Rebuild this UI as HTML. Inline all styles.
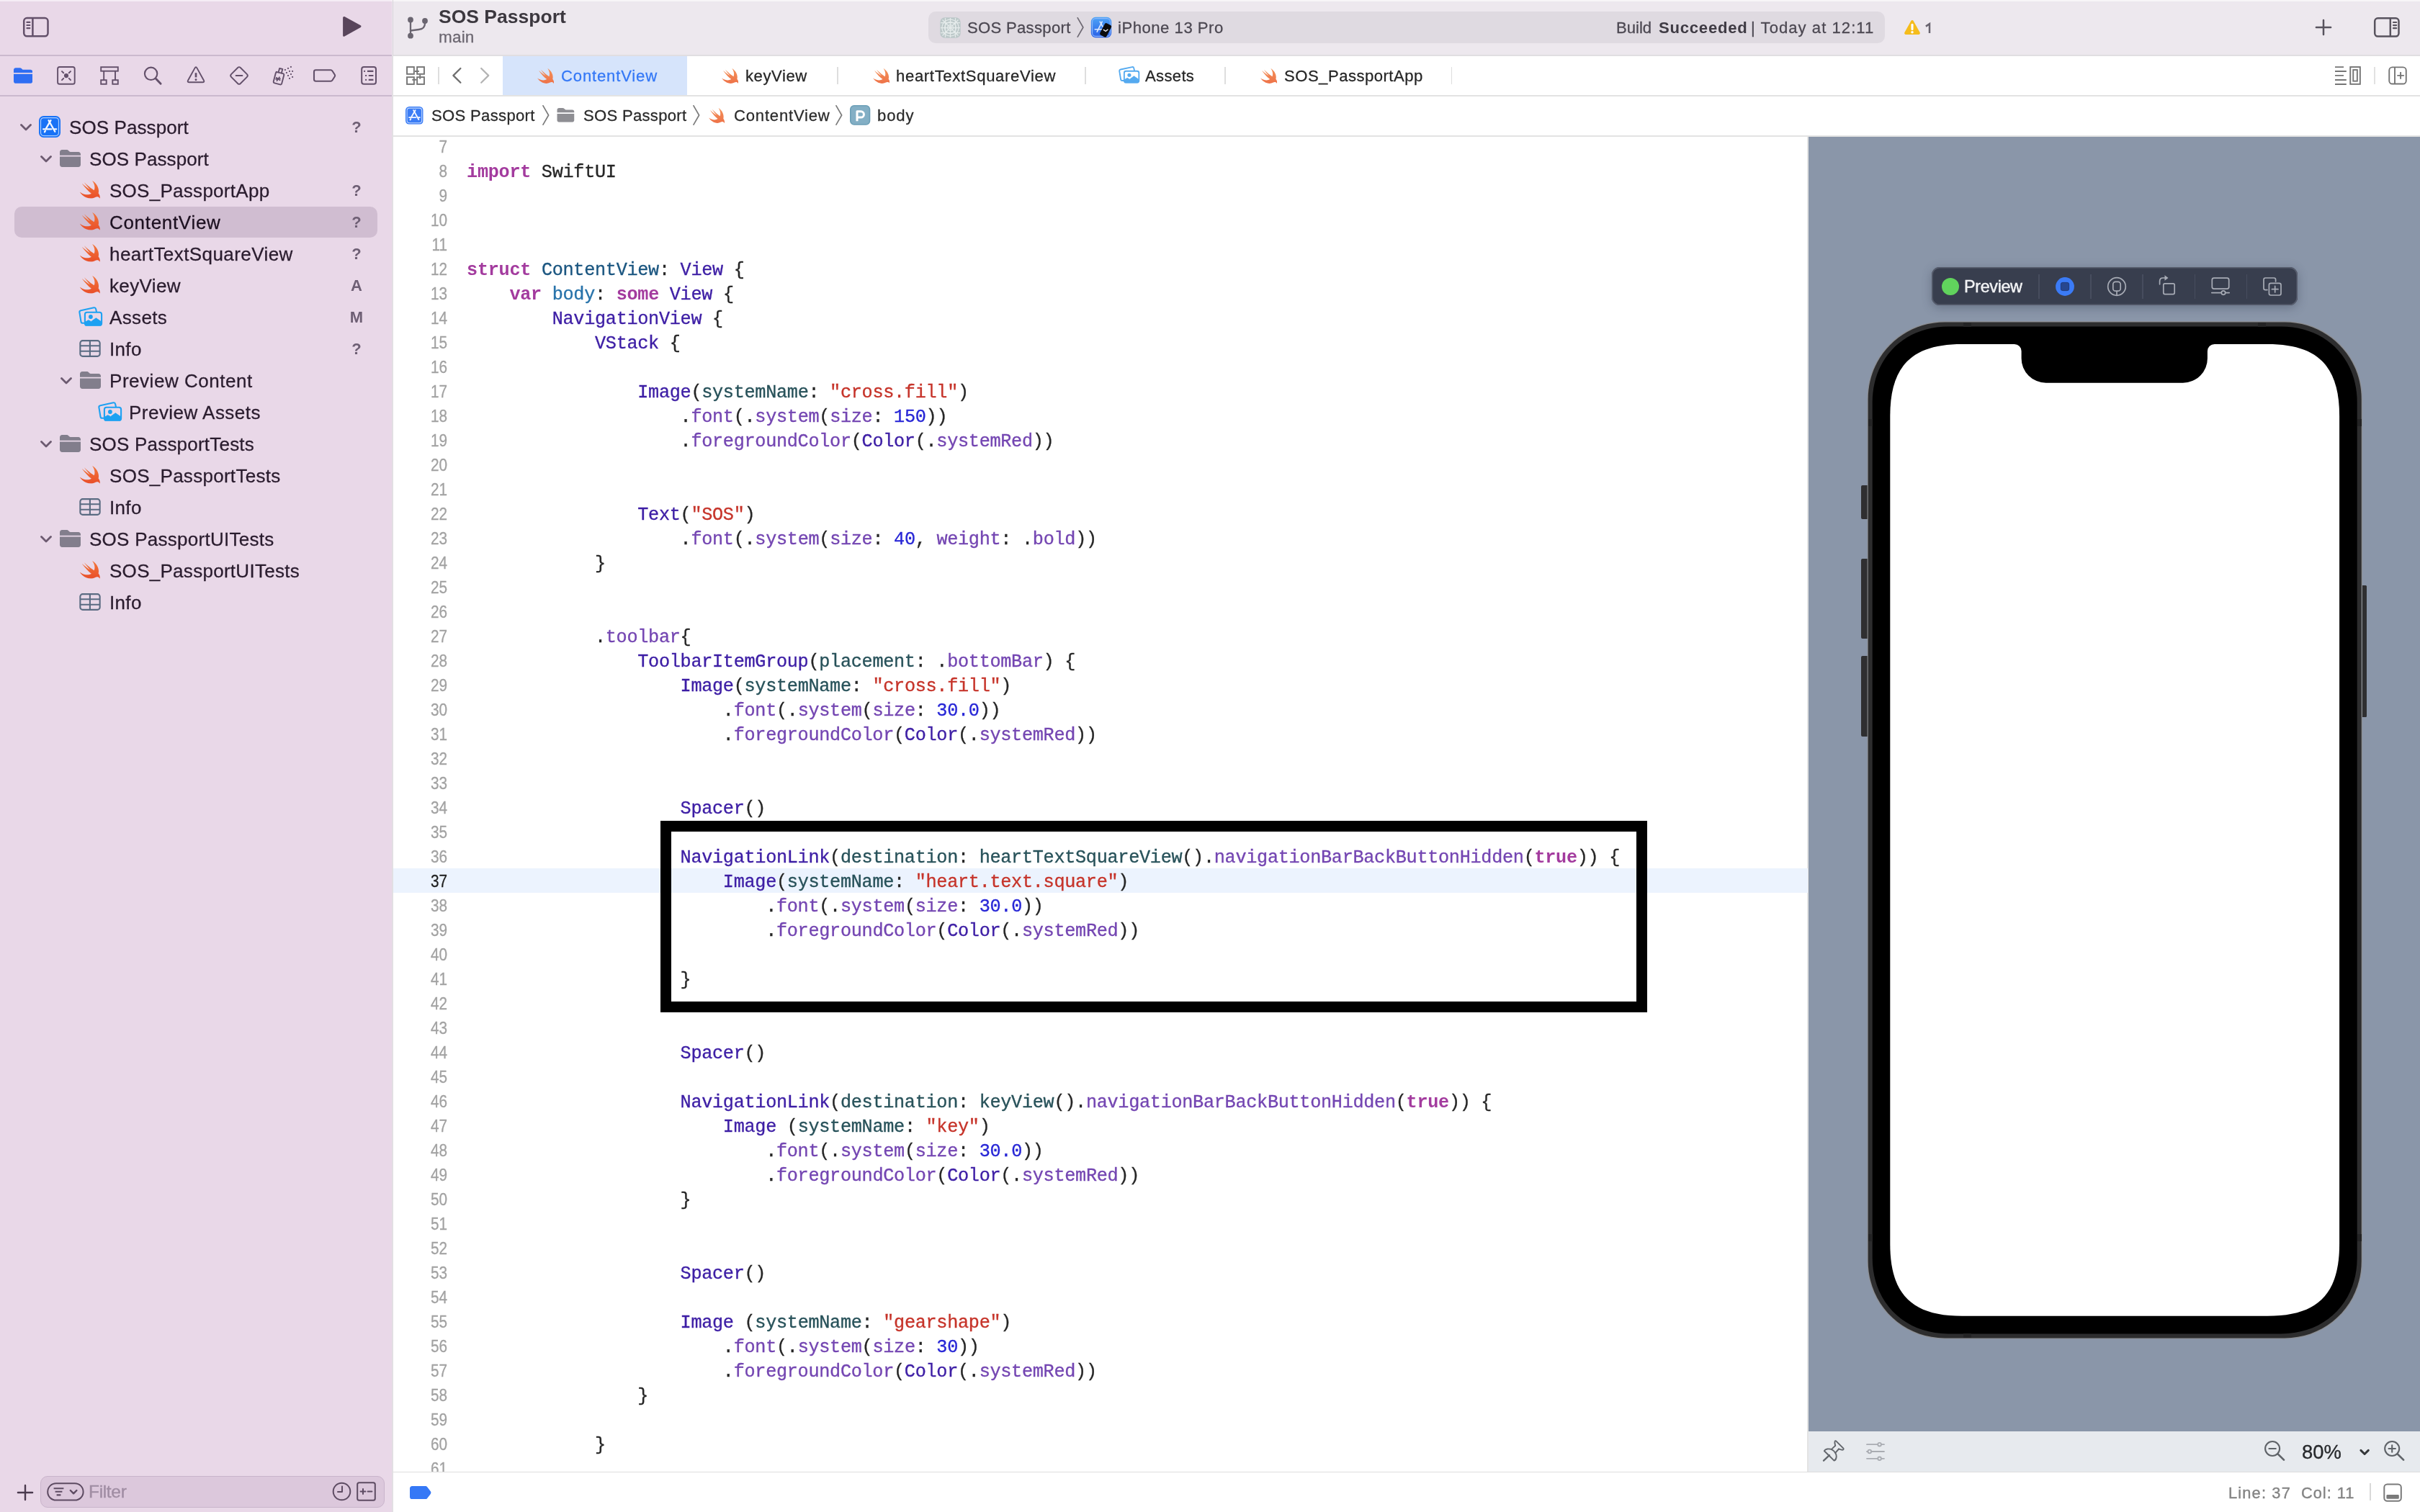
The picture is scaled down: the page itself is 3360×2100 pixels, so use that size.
<!DOCTYPE html>
<html><head><meta charset="utf-8"><title>Xcode</title>
<style>
html,body{margin:0;padding:0;}
body{width:3360px;height:2100px;overflow:hidden;background:#fff;position:relative;font-family:"Liberation Sans",sans-serif;}
body>div,body>span,body>svg{position:absolute;}
.t{white-space:pre;will-change:transform;}
.s{font-family:"Liberation Sans",sans-serif;-webkit-text-stroke:0.280px;}
.m{font-family:"Liberation Mono",monospace;}
#code{position:absolute;left:0;top:0;will-change:transform;}
.cl{position:absolute;left:648.100px;height:34px;line-height:34px;font-family:"Liberation Mono",monospace;font-size:25.200px;white-space:pre;color:#262626;letter-spacing:-0.292px;-webkit-text-stroke:0.350px;}
.ln{position:absolute;width:80px;left:540.800px;text-align:right;height:34px;line-height:34px;font-family:"Liberation Sans",sans-serif;font-size:23.600px;color:#a2a2a2;transform:scaleX(.88);transform-origin:100% 50%;-webkit-text-stroke:0.300px;}
.k{color:#a33b9e;font-weight:bold;-webkit-text-stroke:0;}
.c{color:#3d1ea5;}
.f{color:#7446b2;}
.p{color:#28525a;}
.d{color:#1b5680;}
.b{color:#2873aa;}
.r{color:#c6342a;}
.n{color:#2726d6;}
</style></head>
<body>
<svg width="0" height="0" style="position:absolute"><defs>
<linearGradient id="sg" x1="0" y1="0" x2="0" y2="1"><stop offset="0" stop-color="#f3773a"/><stop offset="1" stop-color="#e94f2a"/></linearGradient>
<linearGradient id="sg2" x1="0" y1="0" x2="0" y2="1"><stop offset="0" stop-color="#f4935a"/><stop offset="1" stop-color="#ee7248"/></linearGradient>
<symbol id="swift" viewBox="2.42 3.42 18.1 16.2" preserveAspectRatio="none"><path fill="url(#sg)" d="M13.543 3.41c4.114 2.47 6.545 7.162 5.549 11.131-.024.093-.05.181-.076.272l.002.001c2.062 2.538 1.5 5.258 1.236 4.745-1.072-2.086-3.066-1.568-4.088-1.043a6.803 6.803 0 0 1-.281.158l-.02.012-.002.002c-2.115 1.123-4.957 1.205-7.812-.022a12.568 12.568 0 0 1-5.64-4.838c.649.48 1.35.902 2.097 1.252 3.019 1.414 6.051 1.311 8.197-.002C9.651 12.73 7.101 9.67 5.146 7.191a10.628 10.628 0 0 1-1.005-1.384c2.34 2.142 6.038 4.83 7.365 5.576C8.69 8.408 6.208 4.743 6.324 4.86c4.436 4.47 8.528 6.996 8.528 6.996.154.085.27.154.36.213.085-.215.16-.437.224-.668.708-2.588-.09-5.548-1.893-7.992z"/></symbol>
<symbol id="swift2" viewBox="2.42 3.42 18.1 16.2" preserveAspectRatio="none"><path fill="url(#sg2)" d="M13.543 3.41c4.114 2.47 6.545 7.162 5.549 11.131-.024.093-.05.181-.076.272l.002.001c2.062 2.538 1.5 5.258 1.236 4.745-1.072-2.086-3.066-1.568-4.088-1.043a6.803 6.803 0 0 1-.281.158l-.02.012-.002.002c-2.115 1.123-4.957 1.205-7.812-.022a12.568 12.568 0 0 1-5.64-4.838c.649.48 1.35.902 2.097 1.252 3.019 1.414 6.051 1.311 8.197-.002C9.651 12.73 7.101 9.67 5.146 7.191a10.628 10.628 0 0 1-1.005-1.384c2.34 2.142 6.038 4.83 7.365 5.576C8.69 8.408 6.208 4.743 6.324 4.86c4.436 4.47 8.528 6.996 8.528 6.996.154.085.27.154.36.213.085-.215.16-.437.224-.668.708-2.588-.09-5.548-1.893-7.992z"/></symbol>
<symbol id="folder" viewBox="0 0 29 24"><path d="M0 3.2C0 1.4 1.4 0 3.2 0h6.2c1.2 0 2 .4 2.8 1.2l1 1c.5.5 1 .7 1.8.7h10.8c1.8 0 3.2 1.4 3.2 3.2v1.6H0z"/><path d="M0 9.6h29v11.2c0 1.8-1.4 3.2-3.2 3.2H3.2C1.4 24 0 22.600 0 20.8z"/></symbol>
<symbol id="appicon" viewBox="0 0 30 30"><rect x="0" y="0" width="30" height="30" rx="6.500" fill="#1872f6"/><rect x="2.500" y="2.500" width="25" height="25" rx="4.300" fill="none" stroke="#a9ccff" stroke-width="1.250"/><g stroke="#f3f7ff" stroke-width="2.300" stroke-linecap="round" fill="none"><path d="M16.500 6.200 10 17.400"/><path d="M8.900 20.600 7.900 22.300"/><path d="M13.500 6.200 22.300 21.700"/><path d="M6.100 18.300h11.500M21.600 18.300h2.600"/></g></symbol>
<symbol id="appicon2" viewBox="0 0 30 30"><rect x="0" y="0" width="30" height="30" rx="6.500" fill="#3b7df5"/><rect x="2.500" y="2.500" width="25" height="25" rx="4.300" fill="none" stroke="#c4d9fd" stroke-width="1.250"/><g stroke="#f3f7ff" stroke-width="2.300" stroke-linecap="round" fill="none"><path d="M16.500 6.200 10 17.400"/><path d="M8.900 20.600 7.900 22.300"/><path d="M13.500 6.200 22.300 21.700"/><path d="M6.100 18.300h11.500M21.600 18.300h2.600"/></g></symbol>
<symbol id="assets" viewBox="0 0 34 29"><g fill="none" stroke="#1da1f2" stroke-width="2.100" stroke-linejoin="round" stroke-linecap="round"><path d="M7.900 23.800H5.900c-1.300 0-2.200-.7-2.400-2L1.400 8.900C1.200 7.500 1.900 6.500 3.300 6.200L21.400 2.300c1.400-.3 2.400.4 2.700 1.800l.8 3.600"/><rect x="8.900" y="8.800" width="23.200" height="18" rx="2.900"/></g><circle cx="16.900" cy="15" r="2.900" fill="#1da1f2"/><path d="M9.500 22.200l4.250-2.500 3.750 2 6.800-4.900 6.900 4.700v5.500H9.500z" fill="#1da1f2" stroke="#1da1f2" stroke-width="1" stroke-linejoin="round"/></symbol>
<symbol id="assets2" viewBox="0 0 34 29"><g fill="none" stroke="#55aaf0" stroke-width="2.100" stroke-linejoin="round" stroke-linecap="round"><path d="M7.900 23.800H5.900c-1.300 0-2.200-.7-2.400-2L1.400 8.900C1.200 7.500 1.900 6.500 3.300 6.200L21.400 2.300c1.400-.3 2.400.4 2.700 1.800l.8 3.600"/><rect x="8.900" y="8.800" width="23.200" height="18" rx="2.900"/></g><circle cx="16.900" cy="15" r="2.900" fill="#55aaf0"/><path d="M9.500 22.200l4.250-2.500 3.750 2 6.800-4.900 6.900 4.700v5.500H9.500z" fill="#55aaf0" stroke="#55aaf0" stroke-width="1" stroke-linejoin="round"/></symbol>
<symbol id="table" viewBox="0 0 30 24"><g fill="none" stroke="#5a6b82" stroke-width="2.100"><rect x="1.350" y="1.150" width="27.300" height="21.700" rx="3.400"/><path d="M1.350 8.300h27.300M1.350 15.700h27.300M14.900 1.150v21.700"/></g></symbol>
<symbol id="chev" viewBox="0 0 16 10"><path d="M1.500 1.500 8 8l6.500-6.500" fill="none" stroke-width="2.800" stroke-linecap="round" stroke-linejoin="round"/></symbol>
<symbol id="jchev" viewBox="0 0 10 28"><path d="M1 .8 8.600 14 1 27.200" fill="none" stroke="#7b7b7b" stroke-width="1.700" stroke-linecap="round" stroke-linejoin="round"/></symbol>
</defs></svg>
<div style="left:0px;top:0px;width:3360px;height:2100px;background:#ffffff;"></div>
<div style="left:544px;top:0px;width:2816px;height:77px;background:#ede8ee;"></div>
<div style="left:0px;top:0px;width:544px;height:2100px;background:#e9d8e8;"></div>
<div style="left:0px;top:0px;width:3360px;height:1.5px;background:rgba(255,255,255,.55);"></div>
<div style="left:544.8px;top:0px;width:1.2px;height:77px;background:#d9d4db;"></div>
<div style="left:544px;top:77px;width:2px;height:2023px;background:#e2dfe3;"></div>
<div style="left:0px;top:76.2px;width:544px;height:1.7px;background:#cbb9ce;"></div>
<div style="left:546px;top:76.3px;width:2814px;height:1.6px;background:#e0dee1;"></div>
<div style="left:0px;top:132.3px;width:544px;height:1.7px;background:#cbb9ce;"></div>
<div style="left:546px;top:132.2px;width:2814px;height:1.8px;background:#e3e3e3;"></div>
<div style="left:546px;top:188.2px;width:2814px;height:1.8px;background:#e3e3e3;"></div>
<div style="left:698px;top:78px;width:256px;height:54px;background:#d6e4fb;"></div>
<div style="left:2511px;top:190px;width:849px;height:1798px;background:#8a96a9;"></div>
<div style="left:2509px;top:190px;width:2px;height:1854.5px;background:#e3e3e3;"></div>
<div style="left:2511px;top:1988px;width:849px;height:56px;background:#e7eaee;"></div>
<div style="left:546px;top:2044px;width:2814px;height:1.7px;background:#dddddd;"></div>
<div style="left:546px;top:1206px;width:1964px;height:34px;background:#ecf3fe;"></div>
<div style="left:917px;top:1140px;width:1340px;height:236px;background:transparent;border:15px solid #000;"></div>
<div id="code" style="left:0;top:0;width:2509px;height:2044px;overflow:hidden;">
<div class="ln" style="top:187.3px;">7</div>
<div class="ln" style="top:221.3px;">8</div>
<div class="cl" style="top:223.1px"><span class="k">import</span> SwiftUI</div>
<div class="ln" style="top:255.3px;">9</div>
<div class="ln" style="top:289.3px;">10</div>
<div class="ln" style="top:323.3px;">11</div>
<div class="ln" style="top:357.3px;">12</div>
<div class="cl" style="top:359.1px"><span class="k">struct</span> <span class="d">ContentView</span>: <span class="c">View</span> {</div>
<div class="ln" style="top:391.3px;">13</div>
<div class="cl" style="top:393.1px">    <span class="k">var</span> <span class="b">body</span>: <span class="k">some</span> <span class="c">View</span> {</div>
<div class="ln" style="top:425.3px;">14</div>
<div class="cl" style="top:427.1px">        <span class="c">NavigationView</span> {</div>
<div class="ln" style="top:459.3px;">15</div>
<div class="cl" style="top:461.1px">            <span class="c">VStack</span> {</div>
<div class="ln" style="top:493.3px;">16</div>
<div class="ln" style="top:527.3px;">17</div>
<div class="cl" style="top:529.1px">                <span class="c">Image</span>(<span class="p">systemName</span>: <span class="r">&quot;cross.fill&quot;</span>)</div>
<div class="ln" style="top:561.3px;">18</div>
<div class="cl" style="top:563.1px">                    .<span class="f">font</span>(.<span class="f">system</span>(<span class="f">size</span>: <span class="n">150</span>))</div>
<div class="ln" style="top:595.3px;">19</div>
<div class="cl" style="top:597.1px">                    .<span class="f">foregroundColor</span>(<span class="c">Color</span>(.<span class="f">systemRed</span>))</div>
<div class="ln" style="top:629.3px;">20</div>
<div class="ln" style="top:663.3px;">21</div>
<div class="ln" style="top:697.3px;">22</div>
<div class="cl" style="top:699.1px">                <span class="c">Text</span>(<span class="r">&quot;SOS&quot;</span>)</div>
<div class="ln" style="top:731.3px;">23</div>
<div class="cl" style="top:733.1px">                    .<span class="f">font</span>(.<span class="f">system</span>(<span class="f">size</span>: <span class="n">40</span>, <span class="f">weight</span>: .<span class="f">bold</span>))</div>
<div class="ln" style="top:765.3px;">24</div>
<div class="cl" style="top:767.1px">            }</div>
<div class="ln" style="top:799.3px;">25</div>
<div class="ln" style="top:833.3px;">26</div>
<div class="ln" style="top:867.3px;">27</div>
<div class="cl" style="top:869.1px">            .<span class="f">toolbar</span>{</div>
<div class="ln" style="top:901.3px;">28</div>
<div class="cl" style="top:903.1px">                <span class="c">ToolbarItemGroup</span>(<span class="p">placement</span>: .<span class="f">bottomBar</span>) {</div>
<div class="ln" style="top:935.3px;">29</div>
<div class="cl" style="top:937.1px">                    <span class="c">Image</span>(<span class="p">systemName</span>: <span class="r">&quot;cross.fill&quot;</span>)</div>
<div class="ln" style="top:969.3px;">30</div>
<div class="cl" style="top:971.1px">                        .<span class="f">font</span>(.<span class="f">system</span>(<span class="f">size</span>: <span class="n">30.0</span>))</div>
<div class="ln" style="top:1003.3px;">31</div>
<div class="cl" style="top:1005.1px">                        .<span class="f">foregroundColor</span>(<span class="c">Color</span>(.<span class="f">systemRed</span>))</div>
<div class="ln" style="top:1037.3px;">32</div>
<div class="ln" style="top:1071.3px;">33</div>
<div class="ln" style="top:1105.3px;">34</div>
<div class="cl" style="top:1107.1px">                    <span class="c">Spacer</span>()</div>
<div class="ln" style="top:1139.3px;">35</div>
<div class="ln" style="top:1173.3px;">36</div>
<div class="cl" style="top:1175.1px">                    <span class="c">NavigationLink</span>(<span class="p">destination</span>: <span class="p">heartTextSquareView</span>().<span class="f">navigationBarBackButtonHidden</span>(<span class="k">true</span>)) {</div>
<div class="ln" style="top:1207.3px;color:#1f1f1f;">37</div>
<div class="cl" style="top:1209.1px">                        <span class="c">Image</span>(<span class="p">systemName</span>: <span class="r">&quot;heart.text.square&quot;</span>)</div>
<div class="ln" style="top:1241.3px;">38</div>
<div class="cl" style="top:1243.1px">                            .<span class="f">font</span>(.<span class="f">system</span>(<span class="f">size</span>: <span class="n">30.0</span>))</div>
<div class="ln" style="top:1275.3px;">39</div>
<div class="cl" style="top:1277.1px">                            .<span class="f">foregroundColor</span>(<span class="c">Color</span>(.<span class="f">systemRed</span>))</div>
<div class="ln" style="top:1309.3px;">40</div>
<div class="ln" style="top:1343.3px;">41</div>
<div class="cl" style="top:1345.1px">                    }</div>
<div class="ln" style="top:1377.3px;">42</div>
<div class="ln" style="top:1411.3px;">43</div>
<div class="ln" style="top:1445.3px;">44</div>
<div class="cl" style="top:1447.1px">                    <span class="c">Spacer</span>()</div>
<div class="ln" style="top:1479.3px;">45</div>
<div class="ln" style="top:1513.3px;">46</div>
<div class="cl" style="top:1515.1px">                    <span class="c">NavigationLink</span>(<span class="p">destination</span>: <span class="p">keyView</span>().<span class="f">navigationBarBackButtonHidden</span>(<span class="k">true</span>)) {</div>
<div class="ln" style="top:1547.3px;">47</div>
<div class="cl" style="top:1549.1px">                        <span class="c">Image</span> (<span class="p">systemName</span>: <span class="r">&quot;key&quot;</span>)</div>
<div class="ln" style="top:1581.3px;">48</div>
<div class="cl" style="top:1583.1px">                            .<span class="f">font</span>(.<span class="f">system</span>(<span class="f">size</span>: <span class="n">30.0</span>))</div>
<div class="ln" style="top:1615.3px;">49</div>
<div class="cl" style="top:1617.1px">                            .<span class="f">foregroundColor</span>(<span class="c">Color</span>(.<span class="f">systemRed</span>))</div>
<div class="ln" style="top:1649.3px;">50</div>
<div class="cl" style="top:1651.1px">                    }</div>
<div class="ln" style="top:1683.3px;">51</div>
<div class="ln" style="top:1717.3px;">52</div>
<div class="ln" style="top:1751.3px;">53</div>
<div class="cl" style="top:1753.1px">                    <span class="c">Spacer</span>()</div>
<div class="ln" style="top:1785.3px;">54</div>
<div class="ln" style="top:1819.3px;">55</div>
<div class="cl" style="top:1821.1px">                    <span class="c">Image</span> (<span class="p">systemName</span>: <span class="r">&quot;gearshape&quot;</span>)</div>
<div class="ln" style="top:1853.3px;">56</div>
<div class="cl" style="top:1855.1px">                        .<span class="f">font</span>(.<span class="f">system</span>(<span class="f">size</span>: <span class="n">30</span>))</div>
<div class="ln" style="top:1887.3px;">57</div>
<div class="cl" style="top:1889.1px">                        .<span class="f">foregroundColor</span>(<span class="c">Color</span>(.<span class="f">systemRed</span>))</div>
<div class="ln" style="top:1921.3px;">58</div>
<div class="cl" style="top:1923.1px">                }</div>
<div class="ln" style="top:1955.3px;">59</div>
<div class="ln" style="top:1989.3px;">60</div>
<div class="cl" style="top:1991.1px">            }</div>
<div class="ln" style="top:2023.3px;">61</div>
</div>
<div style="left:546px;top:2045.3px;width:2814px;height:55px;background:#ffffff;"></div>
<div style="left:20px;top:287px;width:504px;height:43px;background:#d0bdd1;border-radius:10px;"></div>
<span id="t1" class="t s" style="top:160.39px;font-size:26px;line-height:34px;color:#2a1c2e;letter-spacing:0.097px;left:95.70px;">SOS Passport</span>
<svg style="left:53.8px;top:161px;" width="30" height="30"><use href="#appicon"/></svg>
<svg style="left:28px;top:171.7px;stroke:#6c5a70;" width="16" height="10"><use href="#chev"/></svg>
<span id="t2" class="t s" style="top:162.38px;font-size:22px;line-height:29px;color:#6e5f74;font-weight:700;-webkit-text-stroke:0;left:475px;width:40px;text-align:center;">?</span>
<span id="t3" class="t s" style="top:204.39px;font-size:26px;line-height:34px;color:#2a1c2e;letter-spacing:0.097px;left:123.70px;">SOS Passport</span>
<svg style="left:83px;top:207.8px;fill:#827e8c;" width="29" height="24"><use href="#folder"/></svg>
<svg style="left:56px;top:215.7px;stroke:#6c5a70;" width="16" height="10"><use href="#chev"/></svg>
<span id="t4" class="t s" style="top:248.39px;font-size:26px;line-height:34px;color:#2a1c2e;letter-spacing:0.276px;left:151.70px;">SOS_PassportApp</span>
<svg style="left:111.4px;top:251.1px;" width="27.9" height="24.7"><use href="#swift"/></svg>
<span id="t5" class="t s" style="top:250.38px;font-size:22px;line-height:29px;color:#6e5f74;font-weight:700;-webkit-text-stroke:0;left:475px;width:40px;text-align:center;">?</span>
<span id="t6" class="t s" style="top:292.39px;font-size:26px;line-height:34px;color:#1c1020;letter-spacing:0.685px;left:151.70px;">ContentView</span>
<svg style="left:111.4px;top:295.1px;" width="27.9" height="24.7"><use href="#swift"/></svg>
<span id="t7" class="t s" style="top:294.38px;font-size:22px;line-height:29px;color:#6e5f74;font-weight:700;-webkit-text-stroke:0;left:475px;width:40px;text-align:center;">?</span>
<span id="t8" class="t s" style="top:336.39px;font-size:26px;line-height:34px;color:#2a1c2e;letter-spacing:0.429px;left:151.70px;">heartTextSquareView</span>
<svg style="left:111.4px;top:339.1px;" width="27.9" height="24.7"><use href="#swift"/></svg>
<span id="t9" class="t s" style="top:338.38px;font-size:22px;line-height:29px;color:#6e5f74;font-weight:700;-webkit-text-stroke:0;left:475px;width:40px;text-align:center;">?</span>
<span id="t10" class="t s" style="top:380.39px;font-size:26px;line-height:34px;color:#2a1c2e;letter-spacing:0.373px;left:151.70px;">keyView</span>
<svg style="left:111.4px;top:383.1px;" width="27.9" height="24.7"><use href="#swift"/></svg>
<span id="t11" class="t s" style="top:382.38px;font-size:22px;line-height:29px;color:#6e5f74;font-weight:700;-webkit-text-stroke:0;left:475px;width:40px;text-align:center;">A</span>
<span id="t12" class="t s" style="top:424.39px;font-size:26px;line-height:34px;color:#2a1c2e;letter-spacing:0.354px;left:152.20px;">Assets</span>
<svg style="left:109.0px;top:425px;" width="34" height="29"><use href="#assets"/></svg>
<span id="t13" class="t s" style="top:426.38px;font-size:22px;line-height:29px;color:#6e5f74;font-weight:700;-webkit-text-stroke:0;left:475px;width:40px;text-align:center;">M</span>
<span id="t14" class="t s" style="top:468.39px;font-size:26px;line-height:34px;color:#2a1c2e;letter-spacing:0.342px;left:152.20px;">Info</span>
<svg style="left:110.0px;top:472px;" width="30" height="24"><use href="#table"/></svg>
<span id="t15" class="t s" style="top:470.38px;font-size:22px;line-height:29px;color:#6e5f74;font-weight:700;-webkit-text-stroke:0;left:475px;width:40px;text-align:center;">?</span>
<span id="t16" class="t s" style="top:512.39px;font-size:26px;line-height:34px;color:#2a1c2e;letter-spacing:0.538px;left:151.70px;">Preview Content</span>
<svg style="left:111px;top:515.8px;fill:#827e8c;" width="29" height="24"><use href="#folder"/></svg>
<svg style="left:84px;top:523.7px;stroke:#6c5a70;" width="16" height="10"><use href="#chev"/></svg>
<span id="t17" class="t s" style="top:556.39px;font-size:26px;line-height:34px;color:#2a1c2e;letter-spacing:0.477px;left:179.40px;">Preview Assets</span>
<svg style="left:136.2px;top:557px;" width="34" height="29"><use href="#assets"/></svg>
<span id="t18" class="t s" style="top:600.39px;font-size:26px;line-height:34px;color:#2a1c2e;letter-spacing:0.211px;left:123.70px;">SOS PassportTests</span>
<svg style="left:83px;top:603.8px;fill:#827e8c;" width="29" height="24"><use href="#folder"/></svg>
<svg style="left:56px;top:611.7px;stroke:#6c5a70;" width="16" height="10"><use href="#chev"/></svg>
<span id="t19" class="t s" style="top:644.39px;font-size:26px;line-height:34px;color:#2a1c2e;letter-spacing:0.284px;left:151.70px;">SOS_PassportTests</span>
<svg style="left:111.4px;top:647.1px;" width="27.9" height="24.7"><use href="#swift"/></svg>
<span id="t20" class="t s" style="top:688.39px;font-size:26px;line-height:34px;color:#2a1c2e;letter-spacing:0.342px;left:152.20px;">Info</span>
<svg style="left:110.0px;top:692px;" width="30" height="24"><use href="#table"/></svg>
<span id="t21" class="t s" style="top:732.39px;font-size:26px;line-height:34px;color:#2a1c2e;letter-spacing:0.265px;left:123.70px;">SOS PassportUITests</span>
<svg style="left:83px;top:735.8px;fill:#827e8c;" width="29" height="24"><use href="#folder"/></svg>
<svg style="left:56px;top:743.7px;stroke:#6c5a70;" width="16" height="10"><use href="#chev"/></svg>
<span id="t22" class="t s" style="top:776.39px;font-size:26px;line-height:34px;color:#2a1c2e;letter-spacing:0.280px;left:151.70px;">SOS_PassportUITests</span>
<svg style="left:111.4px;top:779.1px;" width="27.9" height="24.7"><use href="#swift"/></svg>
<span id="t23" class="t s" style="top:820.39px;font-size:26px;line-height:34px;color:#2a1c2e;letter-spacing:0.342px;left:152.20px;">Info</span>
<svg style="left:110.0px;top:824px;" width="30" height="24"><use href="#table"/></svg>
<svg style="left:28px;top:18px" width="46" height="40" viewBox="28 18 46 40"><g fill="none" stroke="#63506a" stroke-width="2.500" stroke-linecap="round"><rect x="33.200" y="25.100" width="33.300" height="25.200" rx="4.200"/><path d="M45.400 25.100v25.200" stroke-linecap="butt"/><path d="M37.400 30.900h4M37.400 35h4M37.400 39.100h4" stroke-width="2.200"/></g></svg>
<svg style="left:474px;top:21px;" width="30" height="32" viewBox="0 0 30 32"><path d="M3.6 3.400 26 15.600 3.600 28.200z" fill="#59455b" stroke="#59455b" stroke-width="3" stroke-linejoin="round"/></svg>
<svg style="left:19px;top:93.7px;fill:#2f6ef3;" width="26.2" height="22"><use href="#folder"/></svg>
<svg style="left:0px;top:84px" width="545" height="42" viewBox="0 84 545 42"><g fill="none" stroke="#63506a" stroke-width="1.900" stroke-linecap="round" stroke-linejoin="round">
<rect x="80.100" y="93" width="23.600" height="23.800" rx="2.600"/>
<path d="M86 99.100l2.200 2.200M98 99.100l-2.200 2.200M86 111.100l2.200-2.200M98 111.100l-2.200-2.200" stroke-width="2"/>
<rect x="140.200" y="93.200" width="23.600" height="5.500" stroke-linejoin="miter"/>
<path d="M144.200 98.700v12.400M160 98.700v12.400" stroke-linecap="butt"/>
<rect x="140.200" y="111.200" width="7.500" height="5.600" stroke-linejoin="miter"/><rect x="156.300" y="111.200" width="7.500" height="5.600" stroke-linejoin="miter"/>
<circle cx="209.600" cy="102.300" r="8.700" stroke-width="2.100"/><path d="M216.600 109.600l6.500 6.600" stroke-width="2.900"/>
<path d="M270.46 94.60Q272.00 91.80 273.54 94.60L282.86 111.50Q284.40 114.30 281.20 114.30L262.80 114.30Q259.60 114.30 261.14 111.50Z" stroke-width="1.900"/>
<path d="M272 101.200v6.200" stroke-width="2.700" stroke-linecap="butt"/>
<path d="M330.16 94.04Q332.00 92.20 333.84 94.04L342.96 103.16Q344.80 105.00 342.96 106.84L333.84 115.96Q332.00 117.80 330.16 115.96L321.04 106.84Q319.20 105.00 321.04 103.16Z" stroke-width="1.900"/><path d="M327.600 105h8.800" stroke-width="2"/>
<path d="M383.600 99.800l9.200 2.400c1.200.3 1.700 1.200 1.400 2.400l-3 11.400c-.3 1.200-1.200 1.700-2.400 1.400l-7.600-2c-1.200-.3-1.700-1.200-1.400-2.400l3-11.400c.3-1.200 1.200-1.700 2.400-1.400z"/>
<path d="M386.600 100.400l1.500-5.500 4.200 1.100-1.500 5.500"/>
<path d="M383.600 107.800l5 3.600M388 107.200l-3.600 5M383 109.800l6 -.4" stroke-width="1.700"/>
<path d="M438.400 97.300h20.800c1 0 1.700.4 2.200 1.200l3.400 5.300c.5.800.5 1.600 0 2.400l-3.400 5.300c-.5.800-1.200 1.200-2.200 1.200h-20.800c-1.500 0-2.400-.9-2.400-2.400v-10.600c0-1.500.9-2.400 2.400-2.400z" stroke-width="2.100"/>
<rect x="502.200" y="93" width="19.800" height="23.700" rx="3" stroke-width="2"/>
<path d="M510 98.900h8.400M511.800 105h6.600M511.800 110.900h6.600" stroke-width="2.100" stroke-linecap="butt"/>
</g>
<g fill="#63506a"><circle cx="92" cy="105.100" r="3.100"/><circle cx="272" cy="110.700" r="1.450"/>
<rect x="505.100" y="97.900" width="2" height="2"/><rect x="507.100" y="104" width="2" height="2"/><rect x="507.100" y="109.900" width="2" height="2"/>
<rect x="402.95" y="91.95" width="1.900" height="1.900"/><rect x="399.05" y="93.95" width="1.900" height="1.900"/><rect x="394.95" y="96.05" width="1.900" height="1.900"/><rect x="401.05" y="97.95" width="1.900" height="1.900"/><rect x="405.15" y="97.95" width="1.900" height="1.900"/><rect x="396.95" y="100.05" width="1.900" height="1.900"/><rect x="403.05" y="102.05" width="1.900" height="1.900"/><rect x="399.05" y="104.05" width="1.900" height="1.900"/><rect x="405.15" y="105.95" width="1.900" height="1.900"/><rect x="401.05" y="107.95" width="1.900" height="1.900"/></g></svg>
<svg style="left:564px;top:21px;" width="32" height="36" viewBox="0 0 32 36"><g fill="none" stroke="#6a6570" stroke-width="2.300" stroke-linecap="round"><path d="M6 7.500v20"/><path d="M26 9v2.500c0 5-3.500 8-8.500 8.500L6 21.500"/></g><circle cx="6" cy="6.500" r="3.900" fill="#6a6570"/><circle cx="6" cy="28.700" r="3.900" fill="#6a6570"/><circle cx="26" cy="8" r="3.900" fill="#6a6570"/></svg>
<span id="t24" class="t s" style="top:6.32px;font-size:26.5px;line-height:34px;color:#3c383f;font-weight:700;-webkit-text-stroke:0;letter-spacing:0.006px;left:609.30px;">SOS Passport</span>
<span id="t25" class="t s" style="top:37.10px;font-size:22.5px;line-height:29px;color:#6b6670;letter-spacing:0.206px;left:609.30px;">main</span>
<div style="left:1289px;top:15.8px;width:1327.5px;height:44px;background:#dfdae1;border-radius:10px;"></div>
<svg style="left:1304.5px;top:23.5px;" width="29" height="29" viewBox="0 0 29 29"><rect x=".3" y=".3" width="28.400" height="28.400" rx="6.500" fill="#bcc8c9"/><g fill="none" stroke="#e4eaea" stroke-width="1.250"><circle cx="14.500" cy="14.500" r="4"/><circle cx="14.500" cy="14.500" r="8"/><circle cx="14.500" cy="14.500" r="11.500"/><path d="M14.500 1v27M1 14.500h27M3.500 3.500l22 22M25.500 3.500l-22 22M7.500 1v27M21.500 1v27M1 7.500h27M1 21.500h27"/></g></svg>
<span id="t26" class="t s" style="top:24.14px;font-size:22.1px;line-height:29px;color:#4c4852;letter-spacing:0.300px;left:1342.70px;">SOS Passport</span>
<svg style="left:1495px;top:23.8px;" width="10.5" height="28" viewBox="0 0 10 28"><path d="M1 .8 8.600 14 1 27.200" fill="none" stroke="#6f6a74" stroke-width="1.700" stroke-linecap="round" stroke-linejoin="round"/></svg>
<svg style="left:1514px;top:23px;" width="31" height="31" viewBox="0 0 31 31"><defs><linearGradient id="dg" x1="0" y1="0" x2="0" y2="1"><stop offset="0" stop-color="#4da4f6"/><stop offset="1" stop-color="#2a5fe6"/></linearGradient></defs><rect x=".8" y=".8" width="28.400" height="28.400" rx="6.300" fill="url(#dg)"/><rect x="2.600" y="2.600" width="24.800" height="24.800" rx="4.600" fill="none" stroke="#8db8fb" stroke-width="1.100"/><g stroke="#dbe8ff" stroke-width="1.600" stroke-linecap="round" fill="none"><path d="M16.200 7.200 9.200 21.200"/><path d="M13.200 7.200 17 14"/><path d="M6.200 17.800h12"/></g><g transform="rotate(28 21 18.500)"><rect x="16.200" y="9.500" width="10.200" height="18.500" rx="2.300" fill="#0c0c0e"/></g><path d="M17.800 18.200l3.400 2.200 3.200-2.600" fill="none" stroke="#e8e8ea" stroke-width="1.400"/></svg>
<span id="t27" class="t s" style="top:24.14px;font-size:22.1px;line-height:29px;color:#4c4852;letter-spacing:0.522px;left:1552.20px;">iPhone 13 Pro</span>
<span id="t28" class="t s" style="top:24.14px;font-size:22.1px;line-height:29px;color:#4c4852;left:2244.30px;">Build </span>
<span id="t29" class="t s" style="top:24.14px;font-size:22.1px;line-height:29px;color:#3f3b44;font-weight:700;-webkit-text-stroke:0;letter-spacing:0.766px;left:2302.70px;">Succeeded</span>
<span id="t30" class="t s" style="top:24.14px;font-size:22.1px;line-height:29px;color:#4c4852;letter-spacing:1.034px;left:2430.70px;">| Today at 12:11</span>
<svg style="left:2643px;top:26.8px;" width="24" height="23" viewBox="0 0 24 23"><path d="M12 1.100c.8 0 1.400.4 1.800 1.100l8.800 15.900c.8 1.400-.2 3-1.800 3H3.200c-1.600 0-2.600-1.600-1.800-3L10.200 2.200c.4-.700 1-1.100 1.800-1.100z" fill="#f5bc1c"/><path d="M12 7.300v6.200" stroke="#fff" stroke-width="3.100" stroke-linecap="round"/><circle cx="12" cy="17.800" r="1.750" fill="#fff"/></svg>
<svg style="left:2671px;top:29px;" width="12" height="19" viewBox="0 0 12 19"><path d="M2.900 7.600 8 4.200v12.800" fill="none" stroke="#69646f" stroke-width="2.500" stroke-linejoin="miter"/></svg>
<svg style="left:3205px;top:18px" width="140" height="42" viewBox="3205 18 140 42"><g fill="none" stroke="#58535e" stroke-width="2.500" stroke-linecap="round"><path d="M3226 27.900v20.200M3215.900 38h20.200"/><rect x="3297.200" y="25.300" width="33.300" height="25.200" rx="4.200"/><path d="M3318.800 25.300v25.200" stroke-linecap="butt"/><path d="M3323 31h4.200M3323 35.100h4.200M3323 39.200h4.200" stroke-width="2.200"/></g></svg>
<svg style="left:560px;top:88px" width="130" height="34" viewBox="560 88 130 34"><g fill="none" stroke="#757575" stroke-width="1.900"><rect x="565.050" y="93.050" width="9.800" height="9.800"/><rect x="579.150" y="93.050" width="9.800" height="9.800"/><rect x="565.050" y="107.150" width="9.800" height="9.800"/><rect x="579.150" y="107.150" width="9.800" height="9.800"/><path d="M575.800 99h6M572.300 110.800h6M583.200 103.800v6"/></g><path d="M639.400 95 629.400 104.900l10 9.900" fill="none" stroke="#6e6e6e" stroke-width="2.300" stroke-linecap="round" stroke-linejoin="round"/><path d="M668.200 95l10 9.900-10 9.900" fill="none" stroke="#b4b4b4" stroke-width="2.300" stroke-linecap="round" stroke-linejoin="round"/></svg>
<div style="left:608.3px;top:93px;width:1.6px;height:24px;background:#dedede;"></div>
<svg style="left:745.9px;top:94.8px;" width="23.2" height="21"><use href="#swift2"/></svg>
<span id="t31" class="t s" style="top:91.24px;font-size:22.1px;line-height:29px;color:#3478f6;letter-spacing:0.823px;left:779.40px;">ContentView</span>
<svg style="left:1001.8px;top:95px;" width="23.3" height="21"><use href="#swift2"/></svg>
<span id="t32" class="t s" style="top:91.24px;font-size:22.1px;line-height:29px;color:#262626;letter-spacing:0.571px;left:1034.70px;">keyView</span>
<div style="left:1162.1px;top:93px;width:1.6px;height:24px;background:#dedede;"></div>
<svg style="left:1211.6px;top:95px;" width="23.6" height="21"><use href="#swift2"/></svg>
<span id="t33" class="t s" style="top:91.24px;font-size:22.1px;line-height:29px;color:#262626;letter-spacing:0.661px;left:1244.20px;">heartTextSquareView</span>
<div style="left:1506.4px;top:93px;width:1.6px;height:24px;background:#dedede;"></div>
<svg style="left:1552.6px;top:91.3px;" width="30" height="25.6"><use href="#assets2"/></svg>
<span id="t34" class="t s" style="top:91.24px;font-size:22.1px;line-height:29px;color:#262626;letter-spacing:0.317px;left:1590.10px;">Assets</span>
<div style="left:1700.3px;top:93px;width:1.6px;height:24px;background:#dedede;"></div>
<svg style="left:1750px;top:95px;" width="23.3" height="21"><use href="#swift2"/></svg>
<span id="t35" class="t s" style="top:91.24px;font-size:22.1px;line-height:29px;color:#262626;letter-spacing:0.489px;left:1783.20px;">SOS_PassportApp</span>
<div style="left:2014.6px;top:93px;width:1.6px;height:24px;background:#dedede;"></div>
<svg style="left:3236px;top:86px" width="112" height="38" viewBox="3236 86 112 38"><g fill="none" stroke="#757575" stroke-width="1.900"><path d="M3242 93.100h12M3242 99h15.800M3242 104.900h12M3242 111h15.800M3242 117h15.800"/><rect x="3263.250" y="93.050" width="13.600" height="23.800"/><rect x="3267.250" y="97.050" width="5.600" height="15.600"/><rect x="3317.250" y="93.350" width="23.500" height="23.200" rx="4.300"/><path d="M3325 93.350v23.200"/><path d="M3328.300 104.900h9.600M3333.100 100.100v9.600"/></g></svg>
<div style="left:3296.2px;top:93px;width:1.6px;height:24px;background:#e2e2e2;"></div>
<svg style="left:563.3px;top:148px;" width="24.7" height="24.8"><use href="#appicon2"/></svg>
<span id="t36" class="t s" style="top:145.74px;font-size:22.1px;line-height:29px;color:#2b2b2b;letter-spacing:0.309px;left:599.30px;">SOS Passport</span>
<svg style="left:752.5px;top:146px;" width="10" height="28"><use href="#jchev"/></svg>
<svg style="left:773.3px;top:150.3px;fill:#8e8e93;" width="24.8" height="19.7"><use href="#folder"/></svg>
<span id="t37" class="t s" style="top:145.74px;font-size:22.1px;line-height:29px;color:#2b2b2b;letter-spacing:0.282px;left:809.50px;">SOS Passport</span>
<svg style="left:962.4px;top:146px;" width="10" height="28"><use href="#jchev"/></svg>
<svg style="left:984px;top:150px;" width="22.1" height="21"><use href="#swift2"/></svg>
<span id="t38" class="t s" style="top:145.74px;font-size:22.1px;line-height:29px;color:#2b2b2b;letter-spacing:0.793px;left:1019.20px;">ContentView</span>
<svg style="left:1160.3px;top:146px;" width="10" height="28"><use href="#jchev"/></svg>
<svg style="left:1178px;top:144px" width="34" height="32" viewBox="1178 144 34 32"><rect x="1180.800" y="146.800" width="26.700" height="26.200" rx="5" fill="#83afc5" stroke="#6c9fb7" stroke-width="1.600"/><path d="M1190 168.200V154.800h5.300a4.150 4.150 0 0 1 0 8.300H1190" fill="none" stroke="#fff" stroke-width="3" stroke-linejoin="round"/></svg>
<span id="t39" class="t s" style="top:145.74px;font-size:22.1px;line-height:29px;color:#2b2b2b;letter-spacing:0.893px;left:1218.00px;">body</span>
<svg style="left:22.5px;top:2060.5px;" width="24" height="24" viewBox="0 0 24 24"><path d="M12 1.900v20.200M1.900 12h20.200" stroke="#4a3a4e" stroke-width="2.400" stroke-linecap="round"/></svg>
<div style="left:56px;top:2050px;width:477.5px;height:43.8px;background:#dcc8dc;border-radius:10px;border:1.500px solid #c9b4cb;box-sizing:border-box;"></div>
<svg style="left:64.5px;top:2058.5px;" width="53" height="27" viewBox="0 0 53 27"><rect x="1.200" y="1.200" width="49.400" height="23.400" rx="11.700" fill="none" stroke="#5d4b62" stroke-width="2"/><g stroke="#5d4b62" stroke-width="2.100" stroke-linecap="butt" fill="none"><path d="M9.600 8.200h13.800M11.600 12.800h9.800M13.600 17.400h5.800"/><path d="M32.800 11l4.300 4.300 4.300-4.300" stroke-width="2.400" stroke-linejoin="round" stroke-linecap="round"/></g></svg>
<span id="t40" class="t s" style="top:2055.81px;font-size:24.5px;line-height:32px;color:#a08da3;letter-spacing:-0.331px;left:123.20px;-webkit-text-stroke:0.400px;">Filter</span>
<svg style="left:460.9px;top:2058px;" width="27" height="27" viewBox="0 0 27 27"><circle cx="13.500" cy="13.500" r="11.800" fill="none" stroke="#5d4b62" stroke-width="2"/><path d="M14 6.600v7.400H8" fill="none" stroke="#5d4b62" stroke-width="2" stroke-linecap="round" stroke-linejoin="round"/></svg>
<svg style="left:494.9px;top:2058px;" width="27" height="27" viewBox="0 0 27 27"><rect x="1.200" y="1.200" width="24.600" height="24.600" rx="2.500" fill="none" stroke="#5d4b62" stroke-width="2"/><path d="M5.600 13.500h6.800M9 10.100v6.800M15.600 13.500h5.800" stroke="#5d4b62" stroke-width="2" stroke-linecap="round"/></svg>
<svg style="left:569px;top:2064px;" width="29.5" height="18.2" viewBox="0 0 29.500 18.200"><path d="M3.300 0h18.200c1.200 0 2 .4 2.700 1.300l4.600 6c.8 1.100.8 2.500 0 3.600l-4.600 6c-.7.900-1.500 1.300-2.700 1.300H3.300C1.300 18.200 0 16.900 0 14.900V3.300C0 1.300 1.300 0 3.300 0z" fill="#3578f6"/></svg>
<span id="t41" class="t s" style="top:2059.65px;font-size:21.8px;line-height:28px;color:#848484;letter-spacing:1.175px;left:3094.20px;-webkit-text-stroke:0.400px;">Line: 37</span>
<span id="t42" class="t s" style="top:2059.65px;font-size:21.8px;line-height:28px;color:#848484;letter-spacing:0.991px;left:3194.90px;-webkit-text-stroke:0.400px;">Col: 11</span>
<div style="left:3290.2px;top:2060px;width:1.6px;height:24px;background:#d9d9d9;"></div>
<svg style="left:3304px;top:2056px" width="36" height="34" viewBox="3304 2056 36 34"><rect x="3310.300" y="2061.400" width="23.500" height="23.300" rx="4.300" fill="none" stroke="#7a7a7a" stroke-width="2"/><rect x="3313.400" y="2076.100" width="17.400" height="5.600" rx="1.300" fill="#7a7a7a"/></svg>
<div style="left:2681.5px;top:371.3px;width:508px;height:53.2px;background:#383e4e;border-radius:11px;box-shadow:0 3px 14px rgba(40,48,70,.35), 0 0 0 1.600px #575d6d inset;"></div>
<div style="left:2696px;top:386px;width:24px;height:24px;background:#61d35d;border-radius:50%;"></div>
<span id="t43" class="t s" style="top:383.39px;font-size:23.4px;line-height:30px;color:#f2f3f5;letter-spacing:-0.367px;left:2727.00px;-webkit-text-stroke:0.450px #f2f3f5;">Preview</span>
<div style="left:2830.0px;top:381px;width:1.6px;height:33.5px;background:#474d5e;"></div>
<div style="left:2902.2px;top:381px;width:1.6px;height:33.5px;background:#474d5e;"></div>
<div style="left:2974.2999999999997px;top:381px;width:1.6px;height:33.5px;background:#474d5e;"></div>
<div style="left:3046.5px;top:381px;width:1.6px;height:33.5px;background:#474d5e;"></div>
<div style="left:3118.5px;top:381px;width:1.6px;height:33.5px;background:#474d5e;"></div>
<svg style="left:2853px;top:384px;" width="28" height="28" viewBox="0 0 28 28"><circle cx="14" cy="14" r="12.900" fill="#3b7bf6"/><rect x="8.400" y="8.400" width="11.200" height="11.200" rx="2.400" fill="#27478f"/><rect x="8.400" y="8.400" width="11.200" height="11.200" rx="2.400" fill="none" stroke="#1f3a7a" stroke-width="1"/></svg>
<svg style="left:2925px;top:384px;" width="28" height="28" viewBox="0 0 28 28"><g fill="none" stroke="#a8acb6" stroke-width="1.700"><circle cx="14" cy="14" r="12.300"/><rect x="8.800" y="7.300" width="10.400" height="12.800" rx="3.400"/><path d="M14 20.100v6.200"/></g></svg>
<svg style="left:2993.5px;top:379px;" width="32" height="34" viewBox="0 0 32 34"><g fill="none" stroke="#a8acb6" stroke-width="1.700" stroke-linejoin="round" stroke-linecap="round"><rect x="9.800" y="14.800" width="15.400" height="14.800" rx="2"/><path d="M4.600 15.800v-4.300c0-2.800 1.700-4.500 4.500-4.500h3.300"/></g><path d="M11.500 3.200l5 3.800-5 3.800z" fill="#a8acb6"/></svg>
<svg style="left:3068px;top:383px;" width="30" height="30" viewBox="0 0 30 30"><g fill="none" stroke="#a8acb6" stroke-width="1.700" stroke-linecap="round"><rect x="3.300" y="3.200" width="23.400" height="15" rx="2.600"/><path d="M2.800 23.600h13M22 23.600h5.200"/><circle cx="19" cy="23.600" r="2.700"/></g></svg>
<svg style="left:3140px;top:383px;" width="30" height="30" viewBox="0 0 30 30"><g fill="none" stroke="#a8acb6" stroke-width="1.700" stroke-linecap="round" stroke-linejoin="round"><path d="M8 19.600H5.400c-1.500 0-2.400-.9-2.400-2.400V5.400C3 3.900 3.900 3 5.400 3h11.800c1.500 0 2.400.9 2.400 2.400V8"/><rect x="10.400" y="10.400" width="16.600" height="16.600" rx="2.400"/><path d="M18.700 14.400v8.600M14.400 18.700h8.600"/></g></svg>
<div style="left:2584.4px;top:674px;width:8.5px;height:47px;background:#2f2f31;border-radius:2px 0 0 2px;"></div>
<div style="left:2584.4px;top:776px;width:8.5px;height:111px;background:#2f2f31;border-radius:2px 0 0 2px;"></div>
<div style="left:2584.4px;top:911px;width:8.5px;height:112px;background:#2f2f31;border-radius:2px 0 0 2px;"></div>
<div style="left:3280px;top:812.5px;width:6px;height:183.4px;background:#2f2f31;border-radius:0 1.500px 1.500px 0;"></div>
<svg style="left:2590px;top:444px" width="694" height="1418" viewBox="2590 444 694 1418"><path d="M2592.60 553.27C2592.60 494.11 2640.41 446.30 2699.57 446.30L3172.83 446.30C3231.99 446.30 3279.80 494.11 3279.80 553.27L3279.80 1752.53C3279.80 1811.69 3231.99 1859.50 3172.83 1859.50L2699.57 1859.50C2640.41 1859.50 2592.60 1811.69 2592.60 1752.53Z" fill="#8c8d90"/><path d="M2593.70 554.13C2593.70 494.60 2640.90 447.40 2700.43 447.40L3171.97 447.40C3231.50 447.40 3278.70 494.60 3278.70 554.13L3278.70 1751.67C3278.70 1811.20 3231.50 1858.40 3171.97 1858.40L2700.43 1858.40C2640.90 1858.40 2593.70 1811.20 2593.70 1751.67Z" fill="#2d2d2e"/><path d="M2599.70 558.81C2599.70 497.25 2643.55 453.40 2705.11 453.40L3167.29 453.40C3228.85 453.40 3272.70 497.25 3272.70 558.81L3272.70 1746.99C3272.70 1808.55 3228.85 1852.40 3167.29 1852.40L2705.11 1852.40C2643.55 1852.40 2599.70 1808.55 2599.70 1746.99Z" fill="#000"/><path d="M2624.30 578.00C2624.30 508.13 2654.43 478.00 2724.30 478.00L3148.10 478.00C3217.97 478.00 3248.10 508.13 3248.10 578.00L3248.10 1727.80C3248.10 1797.67 3217.97 1827.80 3148.10 1827.80L2724.30 1827.80C2654.43 1827.80 2624.30 1797.67 2624.30 1727.80Z" fill="#fff"/></svg>
<svg style="left:2786px;top:474px" width="300" height="62" viewBox="2786 474 300 62"><path d="M2790 476H3082V478H3074.700a9.800 9.800 0 0 0-9.800 9.800V497.700a34 34 0 0 1-34 34H2840.600a34 34 0 0 1-34-34V487.800a9.800 9.800 0 0 0-9.800-9.800H2790Z" fill="#000"/></svg>
<div style="left:2726px;top:447.5px;width:11px;height:6.3px;background:#232324;"></div>
<div style="left:3135px;top:447.5px;width:11px;height:6.3px;background:#232324;"></div>
<div style="left:2726px;top:1851.7px;width:11px;height:6.3px;background:#232324;"></div>
<div style="left:2593.7px;top:581.5px;width:6.3px;height:10px;background:#232324;"></div>
<div style="left:3273.2px;top:581.5px;width:6.3px;height:10px;background:#232324;"></div>
<div style="left:2593.7px;top:1713.5px;width:6.3px;height:10px;background:#232324;"></div>
<div style="left:3273.2px;top:1713.5px;width:6.3px;height:10px;background:#232324;"></div>
<svg style="left:2526px;top:1996px" width="40" height="38" viewBox="2526 1996 40 38"><g fill="none" stroke="#62666c" stroke-width="1.900" stroke-linejoin="round" stroke-linecap="round"><path d="M2532 2028.700L2540 2021.100" stroke-width="2.300"/><path d="M2532.900 2015.200C2534 2012.500 2539 2011.500 2543 2013.200C2547.500 2015.200 2550.500 2020 2549.500 2024.500C2549.200 2026.500 2548.300 2028 2546.500 2028.600Z"/><path d="M2542.900 2012.900L2548.200 2007.900M2548.200 2017.800L2553 2012.500"/><path d="M2548.200 2007.900C2547.600 2005 2547 2003 2547.600 2001.800C2548 2001 2548.800 2001 2549.400 2001.600L2559.200 2011.400C2560 2012.200 2559.800 2013.200 2558.800 2013.600C2557 2014 2555 2013.200 2553 2012.500"/></g></svg>
<svg style="left:2589px;top:2002px;" width="30" height="28" viewBox="0 0 30 28"><g stroke="#a9acb2" stroke-width="1.800" stroke-linecap="round" fill="#e7eaee"><path d="M3 4.200h24M3 14h24M3 23.800h24"/><circle cx="20.600" cy="4.200" r="2.300"/><circle cx="6.800" cy="14" r="2.300"/><circle cx="20.600" cy="23.800" r="2.300"/></g></svg>
<svg style="left:3138px;top:1994px" width="212" height="42" viewBox="3138 1994 212 42"><g fill="none" stroke="#5f6368" stroke-width="2.100" stroke-linecap="round"><circle cx="3155.100" cy="2012" r="10"/><path d="M3162.600 2019.400l8.400 8.200" stroke-width="2.700"/><path d="M3150.400 2012h9.400"/><circle cx="3321.200" cy="2012" r="10"/><path d="M3328.700 2019.400l8.400 8.200" stroke-width="2.700"/><path d="M3316.500 2012h9.400M3321.200 2007.300v9.400"/><path d="M3277.900 2014.400l5.200 5.100 5.200-5.100" stroke="#35373a" stroke-width="3" stroke-linejoin="round"/></g></svg>
<span id="t44" class="t s" style="top:1998.81px;font-size:27.4px;line-height:36px;color:#26282b;letter-spacing:-0.014px;left:3196.10px;-webkit-text-stroke:0.300px;">80%</span>
</body></html>
